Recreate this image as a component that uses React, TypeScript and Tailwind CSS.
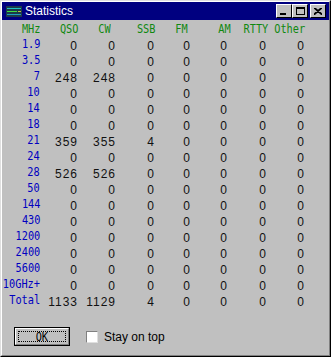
import React from "react";

const cols = ["QSO", "CW", "SSB", "FM", "AM", "RTTY", "Other"];

// header nudges so labels sit where the original dialog draws them
const headPad = ["", "pr-[5px]", "", "pr-[3px]", "-mr-[3px]", "-mr-[1px]", ""];

const rows: [string, number[]][] = [
  ["1.9", [0, 0, 0, 0, 0, 0, 0]],
  ["3.5", [0, 0, 0, 0, 0, 0, 0]],
  ["7", [248, 248, 0, 0, 0, 0, 0]],
  ["10", [0, 0, 0, 0, 0, 0, 0]],
  ["14", [0, 0, 0, 0, 0, 0, 0]],
  ["18", [0, 0, 0, 0, 0, 0, 0]],
  ["21", [359, 355, 4, 0, 0, 0, 0]],
  ["24", [0, 0, 0, 0, 0, 0, 0]],
  ["28", [526, 526, 0, 0, 0, 0, 0]],
  ["50", [0, 0, 0, 0, 0, 0, 0]],
  ["144", [0, 0, 0, 0, 0, 0, 0]],
  ["430", [0, 0, 0, 0, 0, 0, 0]],
  ["1200", [0, 0, 0, 0, 0, 0, 0]],
  ["2400", [0, 0, 0, 0, 0, 0, 0]],
  ["5600", [0, 0, 0, 0, 0, 0, 0]],
  ["10GHz+", [0, 0, 0, 0, 0, 0, 0]],
  ["Total", [1133, 1129, 4, 0, 0, 0, 0]],
];

const grid = "grid grid-cols-[38px_38px_38px_39px_36px_37px_39px_38px]";
const cell = "flex justify-end items-center h-[16px] leading-[16px]";

function Narrow({ children, className = "" }: { children: React.ReactNode; className?: string }) {
  return (
    <span
      className={`inline-block origin-right scale-x-[0.79] font-['DejaVu_Sans_Mono',monospace] text-[13px] leading-[16px] ${className}`}
    >
      {children}
    </span>
  );
}

function TitleButton({ children }: { children: React.ReactNode }) {
  return (
    <div className="w-[16px] h-[14px] bg-[#c0c0c0] border border-t-white border-l-white border-r-black border-b-black flex items-center justify-center">
      {children}
    </div>
  );
}

export default function App() {
  return (
    <div className="w-[335px] h-[361px] bg-white">
      <div className="w-[331px] h-[357px] bg-[#c0c0c0] border border-t-[#dfdfdf] border-l-[#dfdfdf] border-r-black border-b-black">
        <div className="h-full border border-t-white border-l-white border-r-[#808080] border-b-[#808080] flex flex-col">
          {/* Title bar */}
          <div className="h-[18px] bg-[#000080] flex items-center pl-[4px] pr-[3px]">
            <svg width="16" height="11" viewBox="0 0 16 11" className="shrink-0">
              <rect x="0" y="0" width="16" height="11" fill="#1c3a4a" />
              <rect x="1" y="2" width="14" height="1" fill="#20c0c0" />
              <rect x="1" y="5" width="10" height="1" fill="#40e040" />
              <rect x="12" y="5" width="3" height="1" fill="#c0c040" />
              <rect x="1" y="8" width="14" height="1" fill="#20a0c0" />
            </svg>
            <span className="ml-[3px] text-white font-['Liberation_Sans',sans-serif] text-[12px] leading-[18px]">
              Statistics
            </span>
            <div className="ml-auto flex items-center">
              <TitleButton>
                <div className="w-[6px] h-[2px] bg-black mt-[6px] -ml-[2px]" />
              </TitleButton>
              <TitleButton>
                <div className="w-[9px] h-[8px] border border-black border-t-2" />
              </TitleButton>
              <div className="w-[2px]" />
              <TitleButton>
                <svg width="8" height="7" viewBox="0 0 8 7">
                  <path d="M0 0 L8 7 M1 0 L8 6 M8 0 L0 7 M7 0 L0 6" stroke="black" strokeWidth="1.2" />
                </svg>
              </TitleButton>
            </div>
          </div>

          {/* Table */}
          <div className="mt-[1px]">
            <div className={`${grid} mb-[-1px] text-[#108810]`}>
              <div className={cell}>
                <Narrow>MHz</Narrow>
              </div>
              {cols.map((c, i) => (
                <div key={c} className={`${cell} ${headPad[i]}`}>
                  <Narrow>{c}</Narrow>
                </div>
              ))}
            </div>
            {rows.map(([band, vals]) => (
              <div key={band} className={grid}>
                <div className={`${cell} text-[#0000c0]`}>
                  <Narrow>{band}</Narrow>
                </div>
                {vals.map((v, i) => (
                  <div
                    key={i}
                    className={`${cell} pt-[3px] font-['Liberation_Sans',sans-serif] text-[12px] tracking-[1px] text-[#111]`}
                  >
                    {v}
                  </div>
                ))}
              </div>
            ))}
          </div>

          {/* Footer */}
          <div className="mt-[19px] flex items-center pl-[12px]">
            <div className="w-[56px] h-[19px] border border-black">
              <div className="h-full border border-t-white border-l-white border-r-[#808080] border-b-[#808080] p-[2px]">
                <div className="h-full border border-dotted border-black flex items-center justify-center">
                  <Narrow className="!origin-center">OK</Narrow>
                </div>
              </div>
            </div>
            <div className="ml-[16px] w-[12px] h-[12px] bg-white border border-t-[#808080] border-l-[#808080] border-r-[#dfdfdf] border-b-[#dfdfdf]" />
            <span className="ml-[6px] font-['Liberation_Sans',sans-serif] text-[12px] text-black">
              Stay on top
            </span>
          </div>
        </div>
      </div>
    </div>
  );
}
